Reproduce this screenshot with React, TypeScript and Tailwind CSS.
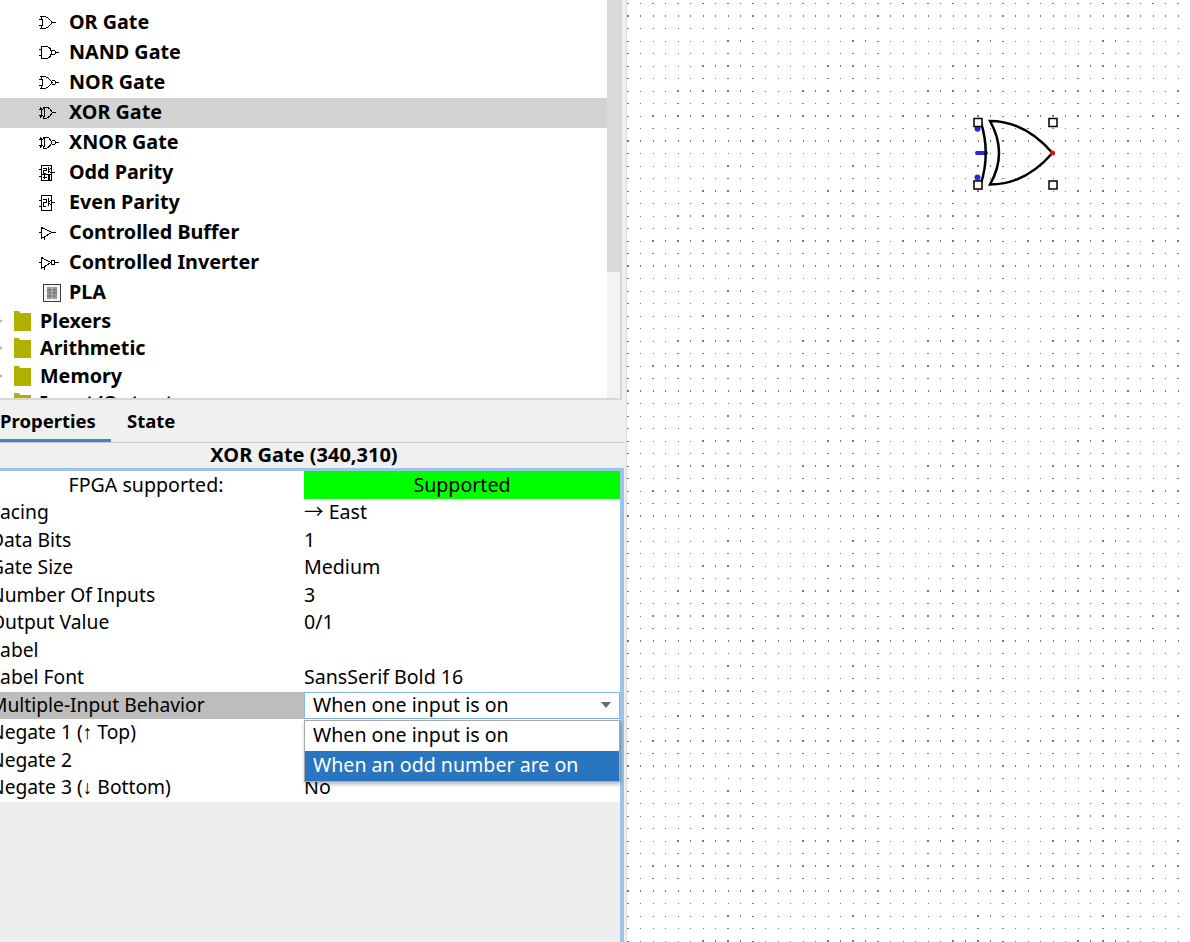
import React from 'react';

const font = { fontFamily: '"Noto Sans", "Noto Sans CJK SC", sans-serif' };

// grid dots of the canvas, the moire comes from the 12.5px zoomed pitch
const buildDots = () => {
  let d = '';
  for (let j = 0; j < 76; j++) {
    for (let i = 0; i < 46; i++) {
      const x = Math.floor(628 + 12.5 * i);
      const y = Math.floor(3.5 + 12.5 * j);
      const a = i % 10;
      const b = j % 10 === 0 ? 10 : j % 10;
      const odd = j % 2 === 1;
      const wide = a % 2 === 0 && (a === 0 || a >= (odd ? 11 - b : 12 - b));
      const tall = odd && (b === 1 || a >= 11 - b);
      const x0 = wide ? x - 1 : x;
      const y0 = tall ? y - 1 : y;
      d += `M${x0} ${y0}h${wide ? 2 : 1}v${tall ? 2 : 1}h${wide ? -2 : -1}z`;
    }
  }
  return d;
};

const Icon: React.FC<{ children: React.ReactNode }> = ({ children }) => (
  <svg
    width="20"
    height="16"
    viewBox="0 0 20 16"
    fill="none"
    stroke="#000"
    strokeWidth="1"
    shapeRendering="crispEdges"
    className="shrink-0"
  >
    {children}
  </svg>
);

const OrBody = () => (
  <g>
    <path d="M2 1.5H6Q10 2.5 13 7.5Q10 12.5 6 13.5H2Q5 7.5 2 1.5Z" />
    <path d="M0 4.5H4M0 10.5H4" />
  </g>
);

const icons: Record<string, React.ReactNode> = {
  or: (
    <Icon>
      <OrBody />
      <path d="M13 7.5H17" />
    </Icon>
  ),
  nand: (
    <Icon>
      <path d="M2.5 1.5H8Q12 3 12.5 7.5Q12 12 8 13.5H2.5Z" />
      <path d="M0 4.5H2M0 10.5H2" />
      <circle cx="14.5" cy="7.5" r="2" />
      <path d="M16.5 7.5H20" />
    </Icon>
  ),
  nor: (
    <Icon>
      <OrBody />
      <circle cx="14.5" cy="7.5" r="2" />
      <path d="M16.5 7.5H20" />
    </Icon>
  ),
  xor: (
    <Icon>
      <path d="M1.5 2Q4 7.5 1.5 13" />
      <path d="M4.5 2H8Q11 3 13.5 7.5Q11 12 8 13H4.5Q7 7.5 4.5 2Z" />
      <path d="M0 4.5H4M0 10.5H4M13.5 7.5H17" />
    </Icon>
  ),
  xnor: (
    <Icon>
      <path d="M1.5 2Q4 7.5 1.5 13" />
      <path d="M4.5 2H8Q11 3 12.5 7.5Q11 12 8 13H4.5Q7 7.5 4.5 2Z" />
      <path d="M0 4.5H4M0 10.5H4" />
      <circle cx="14.5" cy="7.5" r="2" />
      <path d="M16.5 7.5H20" />
    </Icon>
  ),
  odd: (
    <Icon>
      <path d="M2.5 .5H12.5V15.5H2.5Z" />
      <path d="M0 4.5H2M0 11.5H2M13 7.5H16" />
      <path d="M4 3H7V5.5H4V8H7M9 2V8M12 3L9.5 5.5L12 8M2.5 9H12.5M5.5 10V14M3.5 12H7.5" />
      <path d="M10 9.5V15" strokeWidth="2" />
    </Icon>
  ),
  even: (
    <Icon>
      <path d="M2.5 .5H12.5V15.5H2.5Z" />
      <path d="M0 5.5H2M0 11.5H2M13 7.5H16" />
      <path d="M4 4H7V7.5H4V11H7M9 3V11M12 5L9.5 7.5L12 10" />
    </Icon>
  ),
  buffer: (
    <Icon>
      <path d="M2.5 2.5L13 7.5L2.5 13.5Z" />
      <path d="M0 7.5H2M13 7.5H17M5.5 12V15" />
    </Icon>
  ),
  inverter: (
    <Icon>
      <path d="M2.5 2.5L12 7.5L2.5 13.5Z" />
      <path d="M0 7.5H2M5.5 12V15" />
      <circle cx="14" cy="7.5" r="2" />
      <path d="M16 7.5H20" />
    </Icon>
  ),
};

const gates = [
  { name: 'OR Gate', icon: 'or' },
  { name: 'NAND Gate', icon: 'nand' },
  { name: 'NOR Gate', icon: 'nor' },
  { name: 'XOR Gate', icon: 'xor', selected: true },
  { name: 'XNOR Gate', icon: 'xnor' },
  { name: 'Odd Parity', icon: 'odd' },
  { name: 'Even Parity', icon: 'even' },
  { name: 'Controlled Buffer', icon: 'buffer' },
  { name: 'Controlled Inverter', icon: 'inverter' },
];

const folders = ['Plexers', 'Arithmetic', 'Memory', 'Input/Output'];

const Arrow = ({ c }: { c: string }) => <span className="font-['Liberation_Sans']">{c}</span>;

const props: { key: string; label: React.ReactNode; value: string; editing?: boolean }[] = [
  { key: 'facing', label: 'Facing', value: '→ East' },
  { key: 'bits', label: 'Data Bits', value: '1' },
  { key: 'size', label: 'Gate Size', value: 'Medium' },
  { key: 'inputs', label: 'Number Of Inputs', value: '3' },
  { key: 'output', label: 'Output Value', value: '0/1' },
  { key: 'label', label: 'Label', value: '' },
  { key: 'font', label: 'Label Font', value: 'SansSerif Bold 16' },
  { key: 'behavior', label: 'Multiple-Input Behavior', value: 'When one input is on', editing: true },
  { key: 'neg1', label: <>Negate 1 (<Arrow c="↑" /> Top)</>, value: 'No' },
  { key: 'neg2', label: 'Negate 2', value: 'No' },
  { key: 'neg3', label: <>Negate 3 (<Arrow c="↓" /> Bottom)</>, value: 'No' },
];

const Folder = () => (
  <svg width="17" height="20" viewBox="0 0 17 20" className="shrink-0">
    <path d="M0 2V0H5L6 2H17V20H0Z" fill="#b0b000" />
  </svg>
);

const TreePane = () => (
  <div className="flex h-[400px] w-[622px] shrink-0 border-r-2 border-b-2 border-[#d6d6d6] bg-white">
    <div className="min-w-0 flex-1 overflow-hidden pt-[8px] text-[19.75px] leading-[30px] font-bold text-black">
      {gates.map((g) => (
        <div key={g.name} className={`flex h-[30px] items-center pl-[39px] ${g.selected ? 'bg-[#d2d2d2]' : ''}`}>
          <span className="flex w-[30px] shrink-0">{icons[g.icon]}</span>
          <span className="-mt-[2px] whitespace-nowrap">{g.name}</span>
        </div>
      ))}
      <div className="flex h-[30px] items-center pl-[43px]">
        <svg width="18" height="18" viewBox="0 0 18 18" className="mr-2 shrink-0">
          <rect x=".5" y=".5" width="17" height="17" fill="#f4f4f4" stroke="#3c3c3c" />
          <rect x="4" y="3" width="10" height="12" fill="#9a9a9a" />
          <path d="M4 6H14M6 9H14M4 12H12" stroke="#5c5c5c" />
          <path d="M9 3V15" stroke="#c4c4c4" />
        </svg>
        <span className="-mt-[2px]">PLA</span>
      </div>
      <div className="-mt-[1px]">
        {folders.map((f) => (
          <div key={f} className="flex h-[27.5px] items-center">
            <span className="ml-[-4px] h-0 w-0 border-y-[4px] border-l-[7px] border-y-transparent border-l-[#b4b4b4]" />
            <span className="ml-[11px] flex w-[26px] shrink-0">
              <Folder />
            </span>
            <span>{f}</span>
          </div>
        ))}
      </div>
    </div>
    <div className="h-full w-[13px] shrink-0 bg-[#f3f3f3]">
      <div className="h-[272px] bg-[#dadada]" />
    </div>
  </div>
);

const PropertyTable = () => (
  <div className="w-[624px] border-t-[3px] border-r-4 border-[#9cc3e8]">
    <div className="grid grid-cols-[304px_316px] bg-white text-[19.6px] leading-[25.5px] text-black">
      <div className="h-[28px] pr-[12px] text-center leading-[28px]">FPGA supported:</div>
      <div className="h-[28px] bg-[#00ff00] text-center leading-[28px]">Supported</div>
      {props.map((p) => (
        <React.Fragment key={p.key}>
          <div className={`h-[27.5px] overflow-hidden text-[19.25px] whitespace-nowrap ${p.editing ? 'bg-[#bdbdbd]' : ''}`}>
            <span className="ml-[-10px] block">{p.label}</span>
          </div>
          {p.editing ? (
            <div className="relative h-[27.5px]">
              <div className="flex h-[27.5px] items-center justify-between border border-[#86b5e6] pr-[8px] pb-[2px] pl-[8px]">
                <span>{p.value}</span>
                <span className="mt-[2px] h-0 w-0 border-x-[5px] border-t-[6px] border-x-transparent border-t-[#6a6a6a]" />
              </div>
              <div className="absolute top-[28px] left-0 z-10 w-full border border-[#a8a8a8] bg-white leading-[28px] shadow-[1px_2px_4px_rgba(0,0,0,0.3)]">
                <div className="h-[30px] pl-[8px]">When one input is on</div>
                <div className="h-[30px] bg-[#2a75bf] pl-[8px] text-white">When an odd number are on</div>
              </div>
            </div>
          ) : (
            <div className="h-[27.5px] whitespace-nowrap">{p.value}</div>
          )}
        </React.Fragment>
      ))}
    </div>
  </div>
);

const App: React.FC = () => (
  <div className="flex h-[942px] w-[1190px] overflow-hidden bg-white" style={font}>
    <div className="flex h-full w-[627px] shrink-0 flex-col border-r border-[#d8d8d8] bg-[#f0f0f0]">
      <TreePane />
      <div className="flex h-[43px] w-[624px] shrink-0 items-end border-b border-[#c8c8c8] text-[18.5px] font-bold text-black">
        <div className="flex h-[42px] w-[111px] items-center border-b-[3px] border-[#3f84c8] pt-[3px]">Properties</div>
        <div className="flex h-[42px] items-center pl-[16px]">State</div>
      </div>
      <div className="h-[25px] w-[608px] shrink-0 text-center text-[20px] leading-[23px] font-bold text-black">
        XOR Gate (340,310)
      </div>
      <PropertyTable />
      <div className="w-[624px] flex-1 border-r-4 border-[#9cc3e8] bg-[#eeeeee]" />
    </div>
    <svg width="563" height="942" viewBox="627 0 563 942" fill="none" className="shrink-0">
      <path d={buildDots()} fill="#777" shapeRendering="crispEdges" />
      {/* selected XOR gate */}
      <path d="M977 153H986" stroke="#2626e6" strokeWidth="4" strokeLinecap="round" />
      <circle cx="977.5" cy="128.7" r="3" fill="#2626e6" />
      <circle cx="977.5" cy="177.5" r="3" fill="#2626e6" />
      <path d="M980.5 121Q991 153 980.5 185" stroke="#000" strokeWidth="2.5" />
      <path
        d="M990 121C1015 121 1036 134 1052.5 153C1036 172 1015 184.5 990 184.5Q1008 153 990 121Z"
        stroke="#000"
        strokeWidth="2.5"
      />
      <circle cx="1052.5" cy="153" r="2.6" fill="#d01818" />
      {[
        [974, 118.5],
        [1049, 118.5],
        [974, 181],
        [1049, 181],
      ].map(([x, y]) => (
        <rect key={`${x}-${y}`} x={x} y={y} width="8" height="8" fill="#fff" stroke="#000" strokeWidth="1.5" />
      ))}
    </svg>
  </div>
);

export default App;
